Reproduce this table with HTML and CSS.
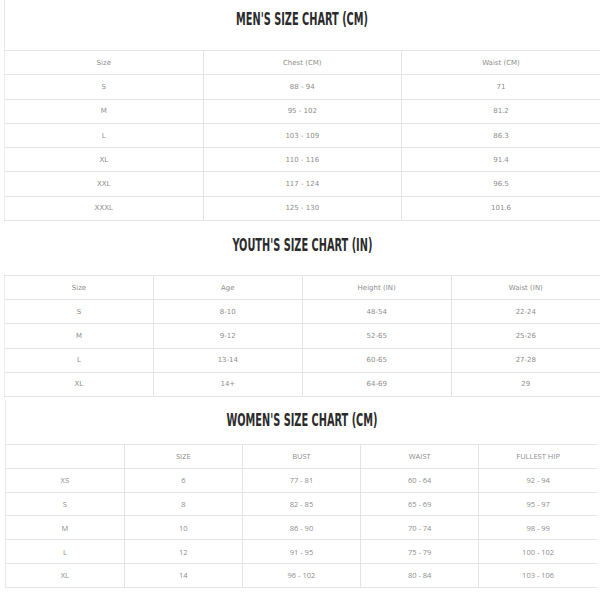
FILE: index.html
```html
<!DOCTYPE html>
<html>
<head>
<meta charset="utf-8">
<link rel="stylesheet" href="styles.css">
</head>
<body>
<section class="chart men">
  <div class="head"><h2 class="title"><span>MEN'S SIZE CHART (CM)</span></h2></div>
  <table class="grid">
    <tr><td>Size</td><td>Chest (CM)</td><td>Waist (CM)</td></tr>
    <tr><td>S</td><td>88 - 94</td><td>71</td></tr>
    <tr><td>M</td><td>95 - 102</td><td>81.2</td></tr>
    <tr><td>L</td><td>103 - 109</td><td>86.3</td></tr>
    <tr><td>XL</td><td>110 - 116</td><td>91.4</td></tr>
    <tr><td>XXL</td><td>117 - 124</td><td>96.5</td></tr>
    <tr><td>XXXL</td><td>125 - 130</td><td>101.6</td></tr>
  </table>
</section>
<section class="chart youth">
  <div class="head"><h2 class="title"><span>YOUTH'S SIZE CHART (IN)</span></h2></div>
  <table class="grid">
    <tr><td>Size</td><td>Age</td><td>Height (IN)</td><td>Waist (IN)</td></tr>
    <tr><td>S</td><td>8-10</td><td>48-54</td><td>22-24</td></tr>
    <tr><td>M</td><td>9-12</td><td>52-65</td><td>25-26</td></tr>
    <tr><td>L</td><td>13-14</td><td>60-65</td><td>27-28</td></tr>
    <tr><td>XL</td><td>14+</td><td>64-69</td><td>29</td></tr>
  </table>
</section>
<section class="chart women">
  <div class="head"><h2 class="title"><span>WOMEN'S SIZE CHART (CM)</span></h2></div>
  <table class="grid">
    <tr><td></td><td>SIZE</td><td>BUST</td><td>WAIST</td><td>FULLEST HIP</td></tr>
    <tr><td>XS</td><td>6</td><td>77 - 81</td><td>60 - 64</td><td>92 - 94</td></tr>
    <tr><td>S</td><td>8</td><td>82 - 85</td><td>65 - 69</td><td>95 - 97</td></tr>
    <tr><td>M</td><td>10</td><td>86 - 90</td><td>70 - 74</td><td>98 - 99</td></tr>
    <tr><td>L</td><td>12</td><td>91 - 95</td><td>75 - 79</td><td>100 - 102</td></tr>
    <tr><td>XL</td><td>14</td><td>96 - 102</td><td>80 - 84</td><td>103 - 106</td></tr>
  </table>
</section>
</body>
</html>
```
FILE: styles.css
```css
html, body {
  margin: 0;
  padding: 0;
  background: #fff;
}
body {
  width: 600px;
  font-family: "DejaVu Sans", sans-serif;
  color: #8a8a8a;
}
.chart {
  display: flex;
  flex-direction: column;
}
.head {
  display: flex;
  justify-content: center;
  box-sizing: border-box;
}
.title {
  margin: 0;
  font-family: "DejaVu Sans Condensed", "DejaVu Sans", sans-serif;
  font-weight: bold;
  font-size: 17px;
  line-height: 20px;
  color: #2b2b2b;
  letter-spacing: 0;
}
.title span {
  display: inline-block;
  transform: scaleX(0.64);
}
.grid {
  border-collapse: collapse;
  table-layout: fixed;
  font-size: 7px;
  color: #8d8d8d;
}
.grid td {
  text-align: center;
  vertical-align: middle;
  padding: 0;
  border: 1px solid #e4e4e4;
  border-top: 0;
  border-right: 0;
}
.grid tr:first-child td {
  border-top: 1px solid #e4e4e4;
}
.grid td:first-child {
  border-left: 1px solid #ececec;
}

.men {
  margin-left: 4px;
  width: 596px;
}
.men .head {
  height: 50px;
  padding-top: 9px;
  border-left: 1px solid #e8e8e8;
}
.men .grid {
  width: 596px;
}
.men .grid td {
  height: 23.3px;
}

.youth {
  margin-left: 4px;
  width: 596px;
}
.youth .head {
  height: 54px;
  padding-top: 14px;
}
.youth .grid {
  width: 596px;
}
.youth .grid td {
  height: 23.2px;
}

.women {
  margin-left: 5px;
  margin-top: 3px;
  width: 591px;
  border-left: 1px solid #e8e8e8;
}
.women .head {
  height: 44px;
  padding-top: 10px;
}
.women .grid {
  width: 591px;
  font-family: "Open Sans", sans-serif;
  font-size: 7.5px;
}
.women .grid td {
  height: 22.8px;
}
.women .grid td:first-child {
  border-left: 0;
}
```
